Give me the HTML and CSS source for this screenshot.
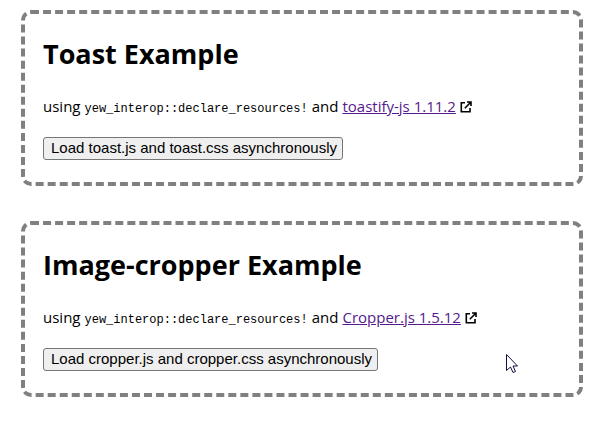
FILE: index.html
```html
<!DOCTYPE html>
<html lang="en">
<head>
<meta charset="utf-8">
<title>Yew Interop Examples</title>
<link rel="stylesheet" href="styles.css">
</head>
<body>
<main class="examples">
  <section class="example">
    <h2 class="title">Toast Example</h2>
    <p class="description">
      <span>using</span>
      <code>yew_interop::declare_resources!</code>
      <span>and</span>
      <a href="#toastify">toastify-js 1.11.2</a>
      <svg class="external" viewBox="0 0 12 12" aria-hidden="true"><path d="M5 1.8H1.3V10.7H10V7M7 1H11V5M10.5 1.5L4.8 7.2"/></svg>
    </p>
    <button class="load" type="button">Load toast.js and toast.css asynchronously</button>
  </section>
  <section class="example">
    <h2 class="title">Image-cropper Example</h2>
    <p class="description">
      <span>using</span>
      <code>yew_interop::declare_resources!</code>
      <span>and</span>
      <a href="#cropper">Cropper.js 1.5.12</a>
      <svg class="external" viewBox="0 0 12 12" aria-hidden="true"><path d="M5 1.8H1.3V10.7H10V7M7 1H11V5M10.5 1.5L4.8 7.2"/></svg>
    </p>
    <button class="load" type="button">Load cropper.js and cropper.css asynchronously</button>
  </section>
</main>
<svg class="cursor" viewBox="0 0 12 20" aria-hidden="true"><path d="M.5 .5V16.5L4.5 13L7 18.5L9.5 17.5L7 12H11.5Z"/></svg>
</body>
</html>
```

FILE: styles.css
```css
body {
  margin: 0;
  background: #fff;
  color: #000;
  font: 15px/20px "Open Sans", "Segoe UI", sans-serif;
}

.examples {
  display: grid;
  gap: 35px;
  padding: 10px 11px 31px 21px;
}

.example {
  padding: 20px 18px 22px;
  border: 4px dashed #808080;
  border-radius: 10px;
}

.title {
  margin: 0;
  font-size: 27px;
  line-height: 40px;
  font-weight: 700;
}

.description {
  display: flex;
  align-items: baseline;
  gap: 4px;
  margin: 22px 0 20px;
}

.description code {
  font: 12px/16px "Liberation Mono", monospace;
}

.description a {
  color: #551a8b;
}

.external {
  align-self: center;
  width: 12px;
  height: 12px;
  fill: none;
  stroke: #000;
  stroke-width: 1.6;
}

.load {
  display: block;
  height: 23px;
  padding: 0 5px 1px 7px;
  border: 1px solid #767676;
  border-radius: 3px;
  background: #efefef;
  color: #000;
  font: 15px/20px "Liberation Sans", Arial, sans-serif;
}

.cursor {
  position: absolute;
  left: 506px;
  top: 354px;
  width: 12px;
  height: 20px;
  fill: #fff;
  stroke: #1d0a3c;
}
```
